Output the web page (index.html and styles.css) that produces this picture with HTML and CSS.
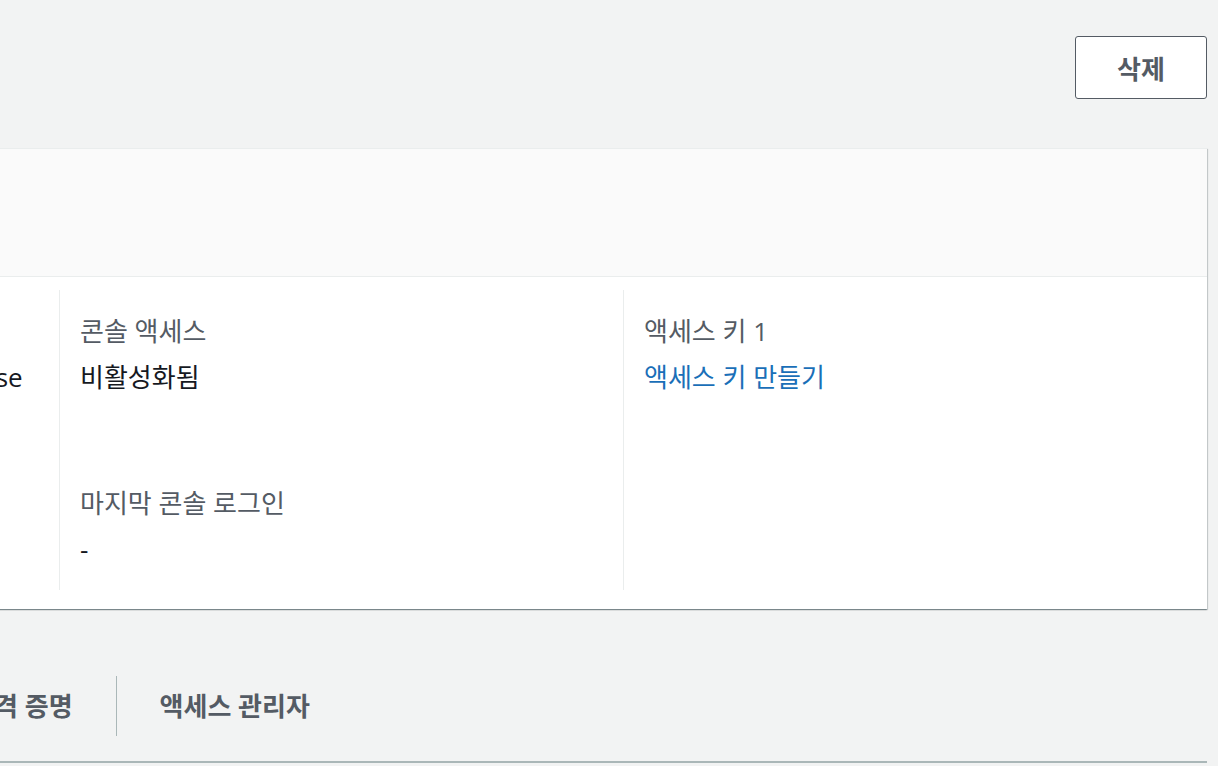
FILE: index.html
```html
<!DOCTYPE html>
<html lang="ko">
<head>
  <meta charset="UTF-8" />
  <meta name="viewport" content="width=device-width, initial-scale=1" />
  <title>사용자 요약</title>
  <link rel="stylesheet" href="styles.css">
</head>
<body>

  <div class="page">
    <div class="page-actions">
      <button class="btn">삭제</button>
    </div>

    <section class="card">
      <div class="card-header">
        <h2>요약</h2>
      </div>
      <div class="card-body">
        <div class="col">
          <div class="kv">
            <div class="kv-label">ARN</div>
            <div class="kv-value">arn:aws:iam::123456789012:user/team/se</div>
          </div>
          <div class="kv">
            <div class="kv-label">생성됨</div>
            <div class="kv-value">1시간 전</div>
          </div>
        </div>
        <div class="col">
          <div class="kv">
            <div class="kv-label">콘솔 액세스</div>
            <div class="kv-value">비활성화됨</div>
          </div>
          <div class="kv">
            <div class="kv-label">마지막 콘솔 로그인</div>
            <div class="kv-value">-</div>
          </div>
        </div>
        <div class="col">
          <div class="kv">
            <div class="kv-label">액세스 키 1</div>
            <div class="kv-value"><a href="#" class="link">액세스 키 만들기</a></div>
          </div>
        </div>
      </div>
    </section>

    <ul class="tabs">
      <li><a href="#" class="tab">권한</a></li>
      <li><a href="#" class="tab">그룹</a></li>
      <li><a href="#" class="tab">태그</a></li>
      <li><a href="#" class="tab">보안 자격 증명</a></li>
      <li><a href="#" class="tab">액세스 관리자</a></li>
    </ul>
  </div>

</body>
</html>
```

FILE: styles.css
```css
:root {
  --bg: #f2f3f3;
  --text: #16191f;
  --muted: #545b64;
  --border: #eaeded;
  --tab-border: #aab7b8;
  --link: #1a6fb8;
}

* {
  box-sizing: border-box;
}

body {
  margin: 0;
  background: var(--bg);
  color: var(--text);
  font-family: "Open Sans", "Noto Sans CJK KR", sans-serif;
  font-size: 26px;
  overflow: hidden;
}

/* the view is scrolled sideways, so the page runs off the left edge */
.page {
  margin-left: -525px;
  padding: 36px 11px 0 0;
}

.page-actions {
  display: flex;
  justify-content: flex-end;
}

.btn {
  width: 132px;
  height: 63px;
  padding: 0;
  border: 1px solid var(--muted);
  border-radius: 3px;
  background: #fff;
  color: var(--muted);
  font-family: inherit;
  font-size: 26px;
  font-weight: 700;
  cursor: pointer;
}

.card {
  margin-top: 49px;
  background: #fff;
  border-top: 1px solid var(--border);
  box-shadow: 0 1px 1px 0 rgba(0, 28, 36, 0.3),
              1px 1px 1px 0 rgba(0, 28, 36, 0.15),
              -1px 1px 1px 0 rgba(0, 28, 36, 0.15);
}

.card-header {
  height: 128px;
  padding: 0 34px;
  background: #fafafa;
  border-bottom: 1px solid var(--border);
}

.card-header h2 {
  margin: 0;
  font-size: 31px;
  line-height: 127px;
  font-weight: 700;
}

.card-body {
  display: grid;
  grid-template-columns: repeat(3, minmax(0, 1fr));
  padding: 13px 20px 19px;
}

.col {
  padding: 24px 20px;
}

.col + .col {
  border-left: 1px solid var(--border);
}

.kv-label {
  color: var(--muted);
  line-height: 34px;
  margin-bottom: 12px;
}

.kv-value {
  line-height: 34px;
  white-space: nowrap;
}

.kv + .kv {
  margin-top: 92px;
}

.link {
  color: var(--link);
  text-decoration: none;
}

.tabs {
  list-style: none;
  display: flex;
  margin: 67px 0 0 -7px;
  padding: 0 0 25px;
  border-bottom: 2px solid var(--tab-border);
}

.tab {
  display: block;
  height: 60px;
  line-height: 60px;
  padding: 0 43px;
  color: var(--muted);
  font-weight: 700;
  text-decoration: none;
}

.tabs li + li .tab {
  border-left: 1px solid var(--tab-border);
}
```
